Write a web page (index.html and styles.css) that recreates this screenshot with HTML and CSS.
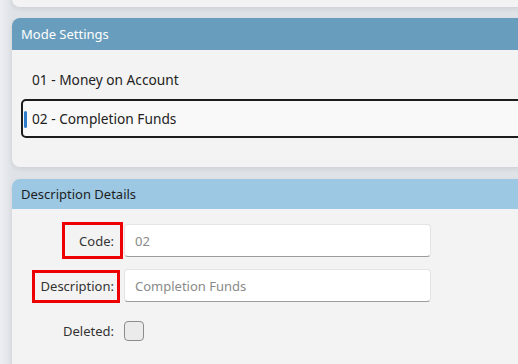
FILE: index.html
```html
<!DOCTYPE html>
<html lang="en">
<head>
    <meta charset="UTF-8">
    <meta name="viewport" content="width=device-width, initial-scale=1.0">
    <title>Mode Settings</title>
    <link rel="stylesheet" href="styles.css">
</head>
<body>
    <div class="page">
        <!-- Previous card (only the bottom is in view) -->
        <div class="card card-top"></div>

        <!-- Mode list -->
        <div class="card">
            <div class="card-header header-dark">Mode Settings</div>
            <ul class="mode-list">
                <li class="mode-item">01 - Money on Account</li>
                <li class="mode-item selected">02 - Completion Funds</li>
            </ul>
        </div>

        <!-- Details form -->
        <div class="card card-last">
            <div class="card-header header-light">Description Details</div>
            <form class="details">
                <label class="field-label"><span class="mark mark-code">Code:</span></label>
                <input class="field-input" type="text" value="02" readonly>

                <label class="field-label"><span class="mark mark-desc">Description:</span></label>
                <input class="field-input" type="text" value="Completion Funds" readonly>

                <label class="field-label">Deleted:</label>
                <span class="check"></span>
            </form>
        </div>
    </div>
</body>
</html>
```

FILE: styles.css
```css
/* General Styles */
html, body {
    margin: 0;
    padding: 0;
    height: 100%;
    overflow: hidden;
}

body {
    font-family: "Noto Sans", "Open Sans", sans-serif;
    font-size: 13px;
    color: #222;
    background: linear-gradient(to right, #eceef2 0, #e4e7eb 6px, #dfe2e6 12px, #dfe2e6 100%);
}

.page {
    display: flex;
    flex-direction: column;
    gap: 11px;
    padding-left: 12px;
    width: 540px;
    margin-top: -30px;
}

.card {
    background-color: #f3f3f3;
    border-radius: 8px;
    box-shadow: 0 2px 5px rgba(0, 0, 0, 0.08);
    overflow: hidden;
}

.card-top {
    height: 37px;
}

.card-last {
    margin-top: 1px;
    height: 220px;
}

.card-header {
    padding-left: 9px;
    display: flex;
    align-items: center;
}

.header-dark {
    height: 32px;
    background-color: #699dbd;
    color: #fff;
}

.header-light {
    height: 30px;
    background-color: #9cc8e3;
    color: #1e1e1e;
}

/* Mode list */
.mode-list {
    list-style: none;
    margin: 0;
    padding: 9px 0 29px 9px;
    font-size: 13.7px;
}

.mode-item {
    height: 40px;
    display: flex;
    align-items: center;
    padding-left: 11px;
    box-sizing: border-box;
}

.mode-item.selected {
    position: relative;
    height: 39px;
    border: 2px solid #1c1c1c;
    border-radius: 5px;
    background-color: #f9f9f9;
    padding-left: 9px;
}

.mode-item.selected::before {
    content: "";
    position: absolute;
    left: 1px;
    top: 10px;
    width: 3px;
    height: 17px;
    border-radius: 2px;
    background-color: #2d7dcc;
}

/* Details form */
.details {
    display: grid;
    grid-template-columns: 102px 307px;
    grid-auto-rows: 33px;
    column-gap: 10px;
    row-gap: 12px;
    padding-top: 15px;
    align-items: center;
}

.field-label {
    justify-self: end;
    color: #333;
}

.mark {
    position: relative;
}

.mark::after {
    content: "";
    position: absolute;
    border: 3px solid #ee0000;
}

.mark-code::after {
    left: -17px;
    right: -9px;
    top: -10px;
    bottom: -9px;
}

.mark-desc::after {
    left: -9px;
    right: -6px;
    top: -7px;
    bottom: -8px;
}

.field-input {
    height: 33px;
    box-sizing: border-box;
    border: 1px solid #e4e4e4;
    border-bottom-color: #9c9c9c;
    border-radius: 4px;
    background-color: #fff;
    padding: 0 10px;
    font-family: inherit;
    font-size: 13px;
    color: #8a8a8a;
    outline: none;
}

.check {
    width: 20px;
    height: 20px;
    box-sizing: border-box;
    border: 1px solid #8c8c8c;
    border-radius: 4px;
    background-color: #ebebeb;
}
```
